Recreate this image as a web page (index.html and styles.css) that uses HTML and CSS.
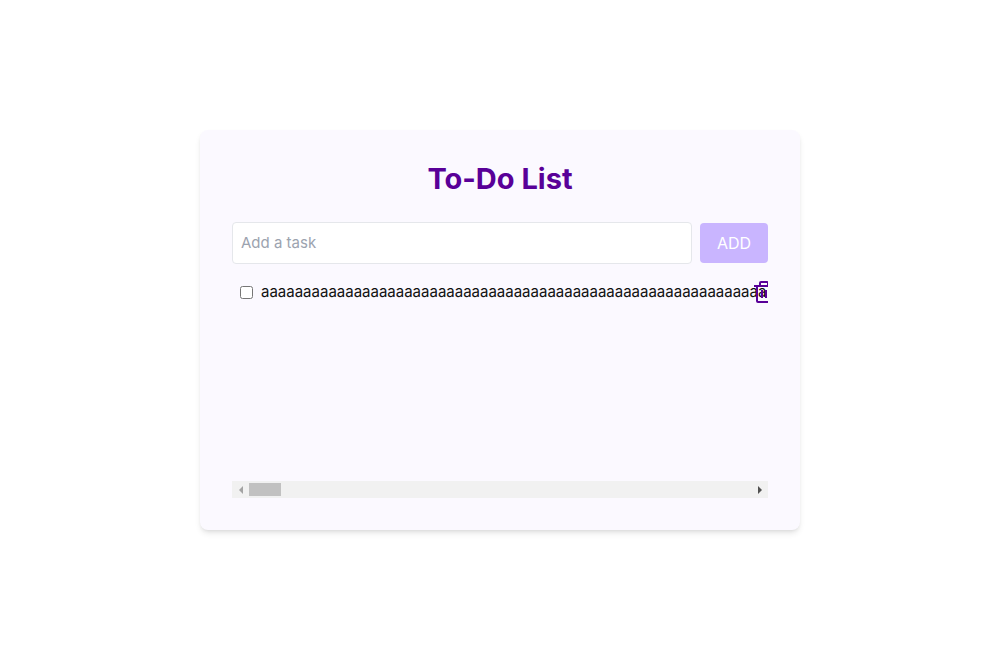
FILE: index.html
```html
<!DOCTYPE html>
<html lang="en">
<head>
<meta charset="utf-8">
<meta name="viewport" content="width=device-width, initial-scale=1">
<title>To-Do List</title>
<link rel="stylesheet" href="styles.css">
</head>
<body>
<main class="card">
  <h1 class="title">To-Do List</h1>
  <form class="task-form">
    <input class="task-input" type="text" placeholder="Add a task" aria-label="Add a task">
    <button class="add-button" type="submit" disabled>ADD</button>
  </form>
  <ul class="task-list">
    <li class="task">
      <input class="task-check" type="checkbox" id="task-1">
      <label class="task-label" for="task-1">aaaaaaaaaaaaaaaaaaaaaaaaaaaaaaaaaaaaaaaaaaaaaaaaaaaaaaaaaaaa</label>
      <button class="delete-button" type="button" aria-label="Delete task">
        <svg class="icon" viewBox="0 0 24 24" aria-hidden="true"><path d="M17 5H22V7H20V21A2 2 0 0 1 18 23H6A2 2 0 0 1 4 21V7H2V5H7V3A2 2 0 0 1 9 1H15A2 2 0 0 1 17 3ZM18 7H6V21H18ZM9 10H11V18H9ZM13 10H15V18H13ZM9 3V5H15V3Z"/></svg>
      </button>
    </li>
  </ul>
  <div class="scrollbar" aria-hidden="true">
    <span class="arrow arrow-left"></span>
    <span class="track"><span class="thumb"></span></span>
    <span class="arrow arrow-right"></span>
  </div>
</main>
</body>
</html>
```
FILE: styles.css
```css
* { box-sizing: border-box; }
body {
  margin: 0;
  min-height: 100vh;
  display: flex;
  align-items: center;
  justify-content: center;
  background: #fff;
  font-family: Inter, "Liberation Sans", sans-serif;
  font-size: 15px;
  line-height: 24px;
}
.card {
  display: flex;
  flex-direction: column;
  width: 60%;
  min-height: 400px;
  padding: 32px;
  border-radius: 8px;
  background: #fbf9ff;
  box-shadow: 0 4px 6px -1px rgb(0 0 0 / 10%), 0 2px 4px -2px rgb(0 0 0 / 10%);
}
.title {
  margin: 0 0 26px;
  color: #590098;
  font-size: 29px;
  font-weight: 700;
  line-height: 34px;
  text-align: center;
}
.task-form {
  display: flex;
  align-items: center;
  gap: 8px;
  margin-bottom: 8px;
}
.task-input {
  flex: 1;
  min-width: 0;
  padding: 8px;
  border: 1px solid #e5e7eb;
  border-radius: 4px;
  background: #fff;
  font: inherit;
}
.task-input::placeholder { color: #9ca3af; }
.add-button {
  min-width: 68px;
  padding: 8px 16px;
  border: 0;
  border-radius: 4px;
  background: #c9b5ff;
  color: #fff;
  font: inherit;
  font-size: 16px;
}
.task-list {
  flex: 1;
  margin: 0;
  padding: 0;
  overflow: hidden;
  list-style: none;
}
.task {
  display: flex;
  align-items: center;
  gap: 8px;
  padding: 8px;
}
.task-check { flex: none; margin: 0; }
.task-label {
  flex: 1;
  min-width: 0;
  margin-right: -8px;
  color: #111;
  white-space: nowrap;
}
.delete-button {
  display: flex;
  flex: none;
  width: 8px;
  padding: 0;
  border: 0;
  background: none;
  color: #590098;
}
.icon {
  position: relative;
  flex: none;
  width: 24px;
  height: 24px;
  fill: currentColor;
}
.scrollbar {
  display: flex;
  align-items: center;
  height: 17px;
  background: #f1f1f1;
}
.arrow {
  display: flex;
  flex: none;
  justify-content: center;
  width: 17px;
}
.arrow::before {
  content: "";
  border: 4px solid transparent;
}
.arrow-left::before {
  border-left-width: 0;
  border-right-color: #a3a3a3;
}
.arrow-right::before {
  border-right-width: 0;
  border-left-color: #505050;
}
.track { flex: 1; }
.thumb {
  display: block;
  width: 32px;
  height: 13px;
  background: #c1c1c1;
}
```
